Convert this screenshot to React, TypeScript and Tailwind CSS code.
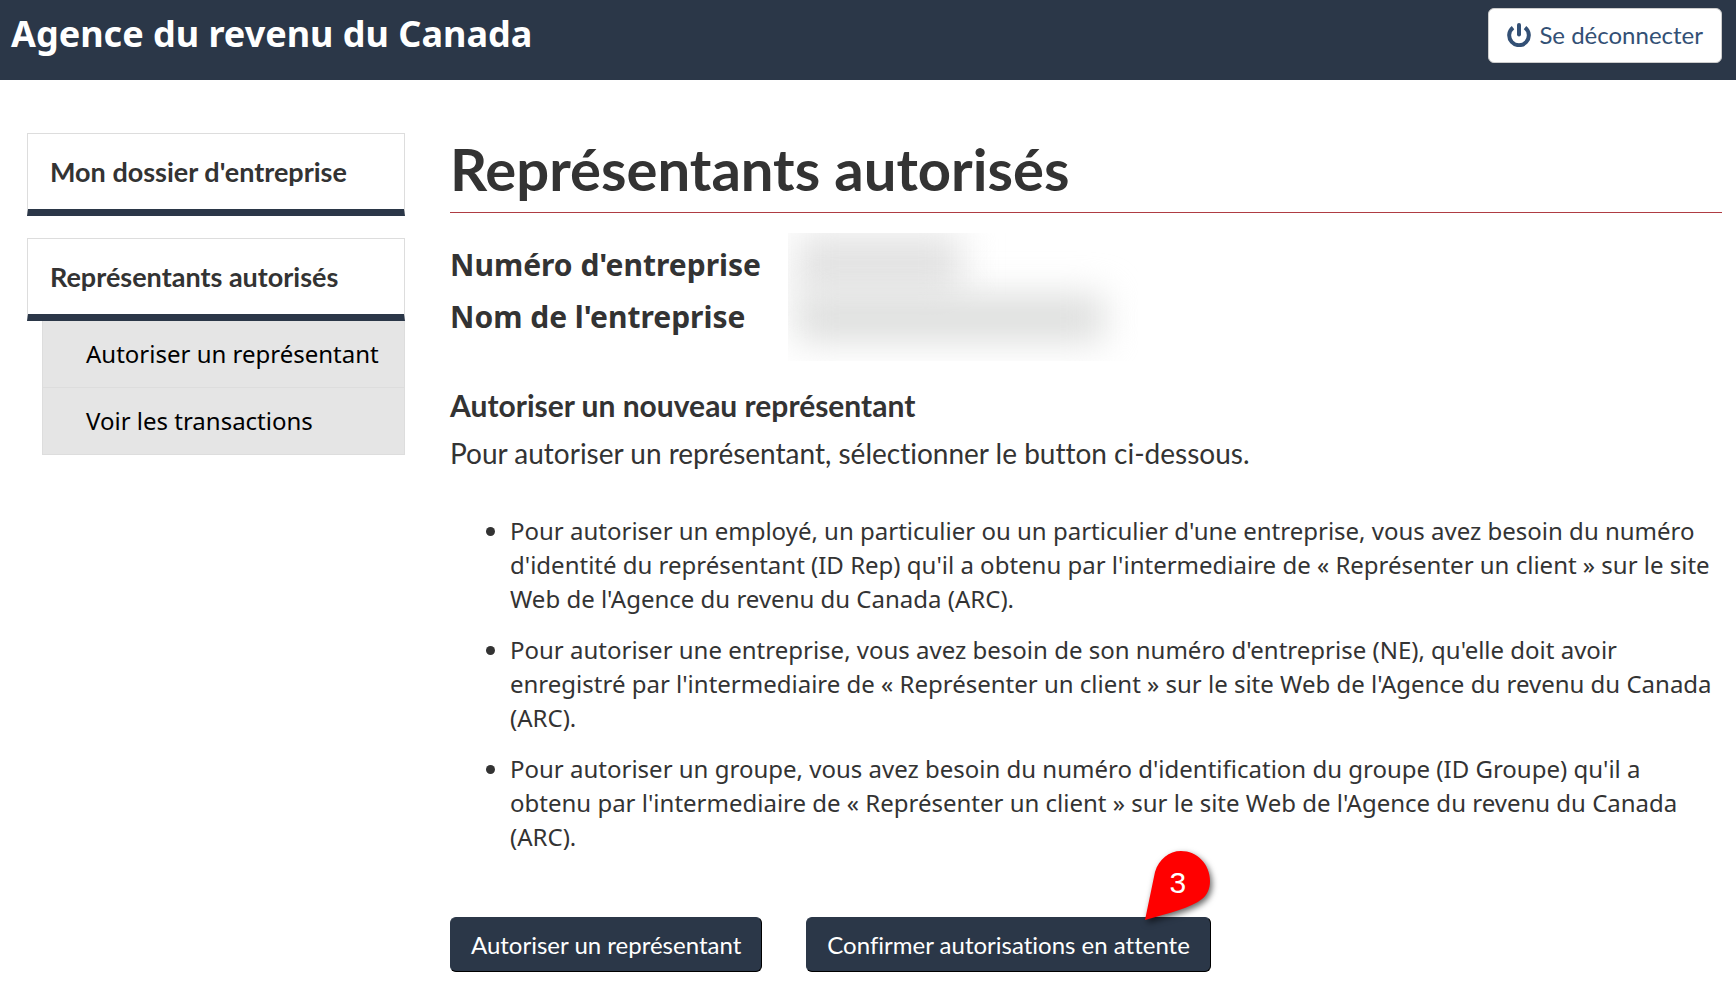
const instructions = [
  "Pour autoriser un employé, un particulier ou un particulier d'une entreprise, vous avez besoin du numéro d'identité du représentant (ID Rep) qu'il a obtenu par l'intermediaire de « Représenter un client » sur le site Web de l'Agence du revenu du Canada (ARC).",
  "Pour autoriser une entreprise, vous avez besoin de son numéro d'entreprise (NE), qu'elle doit avoir enregistré par l'intermediaire de « Représenter un client » sur le site Web de l'Agence du revenu du Canada (ARC).",
  "Pour autoriser un groupe, vous avez besoin du numéro d'identification du groupe (ID Groupe) qu'il a obtenu par l'intermediaire de « Représenter un client » sur le site Web de l'Agence du revenu du Canada (ARC).",
];

const sideHeading =
  "block border border-b-[7px] border-[#ddd] border-b-[#2b3748] px-[22px] py-5 text-[27px] leading-[35px] font-bold text-[#333] font-['Lato',sans-serif]";
const subLink = "block border border-t-0 border-[#ddd] bg-[#e5e5e5] pr-4 pl-[43px] py-4 leading-[34px] text-black";
const actionButton =
  "h-[55px] rounded-md border border-[#2b3748] border-r-black border-b-black bg-[#2b3748] px-5 text-[24px] text-white font-['Lato',sans-serif]";

function PowerIcon() {
  return (
    <svg width="24" height="24" viewBox="0 0 24 24" fill="none" stroke="currentColor" strokeWidth="4" aria-hidden="true">
      <path d="M6 4.6 A9.8 9.8 0 1 0 18 4.6" />
      <path d="M12 2 V11.5" strokeLinecap="round" />
    </svg>
  );
}

function StepMarker() {
  return (
    <div className="absolute right-0 bottom-[51px] h-[70px] w-[66px]">
      <svg
        className="absolute inset-0 overflow-visible drop-shadow-[2px_3px_3px_rgba(0,0,0,0.6)]"
        width="66"
        height="70"
        viewBox="0 0 66 70"
        aria-hidden="true"
      >
        <path d="M0 69 L10 21 C14 8 24 0 36 0 C52 0 65 13 65 30 C65 38 62 44 57 48 C46 57 24 62 0 69 Z" fill="#f00" />
      </svg>
      <span className="relative block pt-[14px] text-center text-[30px] leading-[36px] text-white font-['Liberation_Sans',sans-serif]">
        3
      </span>
    </div>
  );
}

export default function App() {
  return (
    <div className="min-h-screen bg-white font-['Noto_Sans',sans-serif] text-[24px] text-[#333] [font-variant-ligatures:none]">
      <header className="flex h-20 items-start justify-between bg-[#2b3748] pt-2 pr-[14px] pl-[11px]">
        <span className="text-[36px] leading-[52px] font-bold text-white">Agence du revenu du Canada</span>
        <button
          type="button"
          className="flex h-[55px] items-center gap-2 rounded-md border border-[#ccc] bg-white px-[18px] pb-[2px] text-[24px] text-[#335075] font-['Lato',sans-serif]"
        >
          <PowerIcon />
          Se déconnecter
        </button>
      </header>

      <div className="flex gap-[45px] pt-[53px] pr-[14px] pl-[27px]">
        <nav className="w-[378px] shrink-0" aria-label="Navigation du dossier">
          <a href="#dossier" className={sideHeading}>
            Mon dossier d'entreprise
          </a>
          <a href="#representants" className={`${sideHeading} mt-[22px]`}>
            Représentants autorisés
          </a>
          <ul className="ml-[15px]">
            <li>
              <a href="#autoriser" className={subLink}>
                Autoriser un représentant
              </a>
            </li>
            <li>
              <a href="#transactions" className={subLink}>
                Voir les transactions
              </a>
            </li>
          </ul>
        </nav>

        <main className="min-w-0 flex-1">
          <h1 className="border-b border-[#af3c43] pb-2 text-[58px] leading-[71px] font-bold font-['Lato',sans-serif]">
            Représentants autorisés
          </h1>

          <div className="mt-5 flex gap-[27px]">
            <dl className="pt-[6px] text-[30px] leading-[52px] font-bold">
              <dt>Numéro d'entreprise</dt>
              <dt>Nom de l'entreprise</dt>
            </dl>
            <div className="h-32 w-[350px] overflow-hidden" aria-hidden="true">
              <div className="ml-2 h-[62px] w-[166px] bg-[#e3e3e3] blur-[18px]" />
              <div className="ml-2 h-[46px] w-[308px] bg-[#dcdddc] blur-[18px]" />
            </div>
          </div>

          <h2 className="mt-6 text-[30px] leading-[40px] font-bold font-['Lato',sans-serif]">
            Autoriser un nouveau représentant
          </h2>
          <p className="mt-2 text-[28px] leading-[40px] font-['Lato',sans-serif]">
            Pour autoriser un représentant, sélectionner le button ci-dessous.
          </p>

          <ul className="mt-[41px] flex list-disc flex-col gap-[17px] pl-[60px] leading-[34px]">
            {instructions.map((text) => (
              <li key={text}>{text}</li>
            ))}
          </ul>

          <div className="mt-[63px] flex gap-11 pb-5">
            <button type="button" className={actionButton}>
              Autoriser un représentant
            </button>
            <div className="relative">
              <button type="button" className={actionButton}>
                Confirmer autorisations en attente
              </button>
              <StepMarker />
            </div>
          </div>
        </main>
      </div>
    </div>
  );
}
